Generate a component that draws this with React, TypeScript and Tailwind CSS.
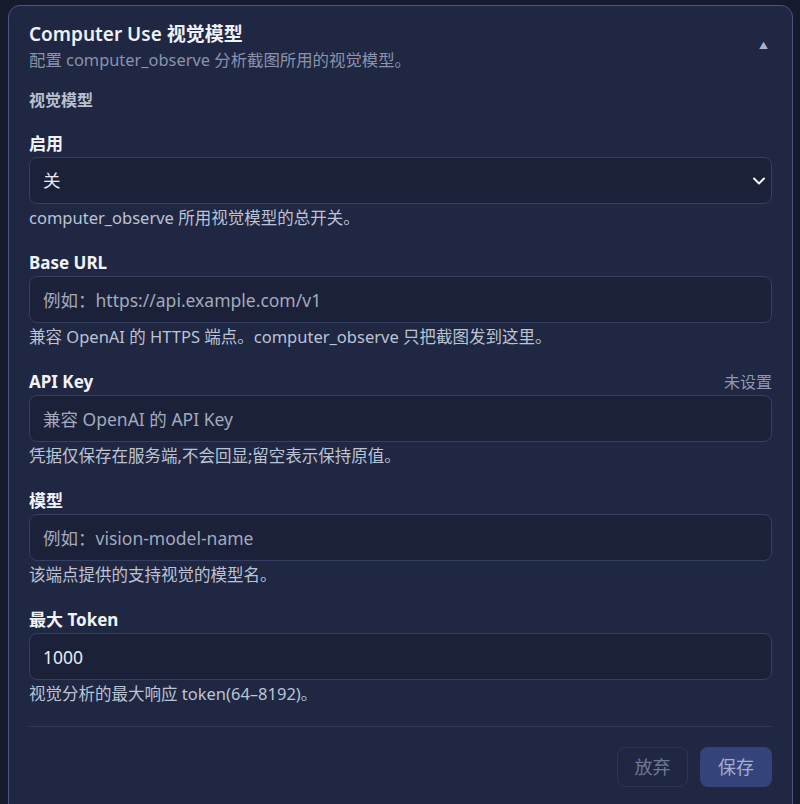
import { ReactNode } from 'react';

// ---------------------------------------------------------------------------
// Field shell
// ---------------------------------------------------------------------------

function Field({
  label,
  hint,
  aside,
  children,
}: {
  label: string;
  hint: string;
  aside?: string;
  children: ReactNode;
}) {
  return (
    <div className="mt-[23px] first:mt-0">
      <div className="flex items-end justify-between mb-px">
        <label className="text-[17px] font-bold leading-6 text-[#f1f3f8]">{label}</label>
        {aside && <span className="text-base leading-5 text-[#8e98b2] mb-[2px]">{aside}</span>}
      </div>
      {children}
      <p className="mt-1 text-[16.5px] leading-5 text-[#bcc3d2]">{hint}</p>
    </div>
  );
}

function TextInput({ placeholder, value }: { placeholder?: string; value?: string }) {
  return (
    <input
      type="text"
      placeholder={placeholder}
      defaultValue={value}
      className="w-full h-[47px] rounded-lg border border-[#343f61] bg-[#1b2139] px-[13px] text-[17.5px] text-[#e8ebf2] placeholder:text-[#a2aabd] focus:outline-none"
    />
  );
}

function Chevron() {
  return (
    <svg width="14" height="14" viewBox="0 0 14 14" fill="none" className="pointer-events-none absolute right-[6px] top-1/2 -translate-y-1/2">
      <path d="M2 4.5l5 5 5-5" stroke="#f2f4f8" strokeWidth="2" strokeLinecap="round" strokeLinejoin="round" />
    </svg>
  );
}

// ---------------------------------------------------------------------------
// Page
// ---------------------------------------------------------------------------

export default function App() {
  return (
    <div
      className="h-[804px] overflow-hidden bg-[#151a2c] pt-[5px] pl-2 pr-[7px]"
      style={{ fontFamily: '"Noto Sans", "Noto Sans CJK SC", sans-serif' }}
    >
      <section className="h-[810px] rounded-xl border border-[#4b5682] bg-[#1f2743] pl-5 pr-5 pt-[15px]">
        {/* Header */}
        <header className="flex items-center justify-between">
          <div>
            <h1 className="text-[19px] font-semibold leading-[26px] text-[#eef1f7]">Computer Use 视觉模型</h1>
            <p className="mt-[3px] text-[16.4px] leading-5 text-[#8a93aa]">配置 computer_observe 分析截图所用的视觉模型。</p>
          </div>
          <span className="mr-1 text-[9px] leading-none text-[#a9b2ca]">▲</span>
        </header>

        <h2 className="mt-5 text-base font-bold leading-5 text-[#b9c0d0]">视觉模型</h2>

        <div className="mt-[22px]">
          <Field label="启用" hint="computer_observe 所用视觉模型的总开关。">
            <div className="relative">
              <select
                defaultValue="off"
                className="w-full h-[47px] appearance-none rounded-lg border border-[#343f61] bg-[#1b2139] px-[13px] text-[17.5px] text-[#e8ebf2] focus:outline-none"
              >
                <option value="off">关</option>
                <option value="on">开</option>
              </select>
              <Chevron />
            </div>
          </Field>

          <Field label="Base URL" hint="兼容 OpenAI 的 HTTPS 端点。computer_observe 只把截图发到这里。">
            <TextInput placeholder="例如：https://api.example.com/v1" />
          </Field>

          <Field label="API Key" aside="未设置" hint="凭据仅保存在服务端,不会回显;留空表示保持原值。">
            <TextInput placeholder="兼容 OpenAI 的 API Key" />
          </Field>

          <Field label="模型" hint="该端点提供的支持视觉的模型名。">
            <TextInput placeholder="例如：vision-model-name" />
          </Field>

          <Field label="最大 Token" hint="视觉分析的最大响应 token(64–8192)。">
            <TextInput value="1000" />
          </Field>
        </div>

        {/* Footer */}
        <div className="mt-[22px] border-t border-[#2f3858] pt-5 flex justify-end gap-3">
          <button className="h-10 w-[71px] rounded-lg border border-[#2d3653] text-lg text-[#6e7895]">放弃</button>
          <button className="h-10 w-[72px] rounded-lg bg-[#35437b] text-lg text-[#a4aed1]">保存</button>
        </div>
      </section>
    </div>
  );
}
